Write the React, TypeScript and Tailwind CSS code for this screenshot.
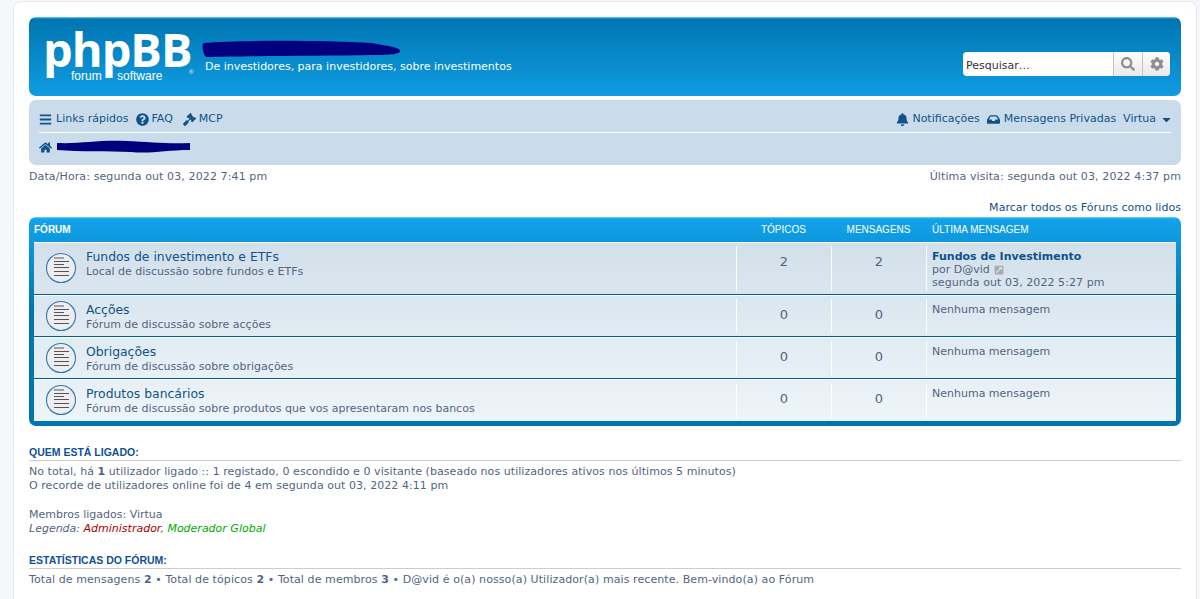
import { FaBars, FaBell, FaCaretDown, FaCog, FaExternalLinkSquareAlt, FaGavel, FaHome, FaInbox, FaQuestionCircle, FaSearch } from 'react-icons/fa';

const font = { fontFamily: '"DejaVu Sans", Verdana, sans-serif' };
const arial = { fontFamily: '"Liberation Sans", Arial, sans-serif' };

const forums = [
  { title: 'Fundos de investimento e ETFs', desc: 'Local de discussão sobre fundos e ETFs', topics: 2, posts: 2, h: 'h-[53px]', last: true },
  { title: 'Acções', desc: 'Fórum de discussão sobre acções', topics: 0, posts: 0, h: 'h-[42px]', last: false },
  { title: 'Obrigações', desc: 'Fórum de discussão sobre obrigações', topics: 0, posts: 0, h: 'h-[42px]', last: false },
  { title: 'Produtos bancários', desc: 'Fórum de discussão sobre produtos que vos apresentaram nos bancos', topics: 0, posts: 0, h: 'h-[42px]', last: false },
];

function ForumIcon() {
  return (
    <svg width="32" height="32" viewBox="0 0 32 32" className="shrink-0">
      <circle cx="16" cy="16" r="14.5" fill="#eeeef1" stroke="#2f77b3" strokeWidth="1.1" />
      <path d="M9 6h10M9 9.500h15M9 12.500h10M9 15.500h15M9 19.500h15M9 23.500h15" stroke="#555" strokeWidth="1" fill="none" />
    </svg>
  );
}

function Scribble({ width, height, d }: { width: number; height: number; d: string }) {
  return (
    <svg width={width} height={height} viewBox={`0 0 ${width} ${height}`} className="shrink-0">
      <path d={d} fill="#00007f" />
    </svg>
  );
}

function Stat({ value }: { value: number }) {
  return (
    <div className="w-[95px] shrink-0 my-[3px] border-l border-white flex justify-center pt-[6px] text-[13px] text-[#536482]">
      {value}
    </div>
  );
}

function ForumRow({ forum }: { forum: (typeof forums)[number] }) {
  return (
    <li className={`flex ${forum.h} border-t border-white border-b border-b-[#00608f] last:border-b-0`}>
      <div className="flex-1 flex pl-[11px] gap-[9px]">
        <div className="flex items-center -mt-[1px]">
          <ForumIcon />
        </div>
        <div className="pt-[6px]">
          <div className="text-[12.4px] leading-[15px] text-[#105289]">{forum.title}</div>
          <div className="text-[11px] leading-[15px] text-[#536482]">{forum.desc}</div>
        </div>
      </div>
      <Stat value={forum.topics} />
      <Stat value={forum.posts} />
      <div className="w-[250px] shrink-0 my-[3px] border-l border-white pl-[5px] pt-[4px] text-[11px] leading-[13px] text-[#536482]">
        {forum.last ? (
          <>
            <div className="font-bold text-[#105289]">Fundos de Investimento</div>
            <div className="flex items-center gap-[4px]">
              por D@vid
              <FaExternalLinkSquareAlt className="text-[10px] text-[#a9a9a9]" />
            </div>
            <div className="tracking-[0.07px]">segunda out 03, 2022 5:27 pm</div>
          </>
        ) : (
          'Nenhuma mensagem'
        )}
      </div>
    </li>
  );
}

export default function App() {
  return (
    <div className="h-[599px] overflow-hidden bg-[#f5f7fa] pl-[13px] pr-[3px] pt-[1px]" style={font}>
      <div className="h-[640px] bg-white border border-[#e6e9ed] rounded-lg px-[15px] pt-[15px] text-[11px] text-[#536482]">
        {/* header */}
        <div className="h-[79px] rounded-[7px] bg-[linear-gradient(to_bottom,#6aceff_0,#0076b1_2px,#12a3eb_92px)] flex items-start justify-between pl-[15px] pr-[10px]">
          <div className="flex">
            <div className="relative w-[158px] h-[79px] text-white">
              <span className="absolute -left-[1px] top-[7px] text-[47px] leading-[50px] font-bold tracking-[-1px]" style={{ fontFamily: '"Open Sans", sans-serif' }}>
                phpBB
              </span>
              <span className="absolute left-[27px] top-[53px] text-[12px] leading-[13px]" style={arial}>forum</span>
              <span className="absolute left-[73px] top-[53px] text-[12px] leading-[13px]" style={arial}>software</span>
              <span className="absolute left-[145px] top-[51px] text-[6px] leading-[8px]" style={arial}>®</span>
            </div>
            <div className="pt-[23px]">
              <Scribble width={199} height={18} d="M1 3 C40 0 120 0 170 3 C185 6 198 7 198 11 C198 14 190 15 170 15 C120 16 40 16 4 17 C1 14 0 8 1 3Z" />
              <div className="text-white text-[11px] leading-[14px] pl-[3px] mt-[2px]">De investidores, para investidores, sobre investimentos</div>
            </div>
          </div>
          <div className="mt-[35px] mr-[1px] flex h-[24px] rounded-[4px] bg-white overflow-hidden">
            <div className="w-[150px] pl-[3px] text-[11px] leading-[28px] text-[#333]">Pesquisar…</div>
            <div className="w-[29px] border-l border-[#c7c3bf] bg-[linear-gradient(to_bottom,#ffffff,#e9e9e9)] flex items-center justify-center">
              <FaSearch className="text-[14px] text-[#8f8f8f]" />
            </div>
            <div className="w-[28px] border-l border-[#c7c3bf] bg-[linear-gradient(to_bottom,#ffffff,#e9e9e9)] flex items-center justify-center">
              <FaCog className="text-[14px] text-[#8f8f8f]" />
            </div>
          </div>
        </div>

        {/* navbar */}
        <div className="mt-[4px] h-[65px] rounded-[7px] bg-[#cadceb] px-[10px] text-[#105289]">
          <div className="h-[33px] border-b border-white flex items-center justify-between pt-[6px]">
            <div className="flex items-center gap-[7px]">
              <span className="flex items-center gap-[4px]">
                <FaBars className="text-[13px]" />
                Links rápidos
              </span>
              <span className="flex items-center gap-[3px]">
                <FaQuestionCircle className="text-[13px]" />
                FAQ
              </span>
              <span className="flex items-center gap-[3px] ml-[3px]">
                <FaGavel className="text-[13px]" />
                MCP
              </span>
            </div>
            <div className="flex items-center gap-[7px]">
              <span className="flex items-center gap-[3px]">
                <FaBell className="text-[13px]" />
                Notificações
              </span>
              <span className="flex items-center gap-[4px]">
                <FaInbox className="text-[13px]" />
                Mensagens Privadas
              </span>
              <span className="flex items-center gap-[6px]">
                Virtua
                <FaCaretDown className="text-[13px] w-[9px]" />
              </span>
            </div>
          </div>
          <div className="flex items-center gap-[4px] h-[28px]">
            <FaHome className="text-[13px]" />
            <Scribble width={135} height={15} d="M1 3 C25 4 40 0 70 1 C95 2 110 4 134 3 L134 10 C110 10 95 14 75 12 C50 11 25 12 1 10Z" />
          </div>
        </div>

        {/* date row */}
        <div className="mt-[5px] h-[14px] leading-[14px] flex justify-between text-[#536482] tracking-[0.11px]">
          <span>Data/Hora: segunda out 03, 2022 7:41 pm</span>
          <span>Última visita: segunda out 03, 2022 4:37 pm</span>
        </div>
        <div className="mt-[17px] h-[14px] leading-[14px] text-right text-[#105289] tracking-[0.03px]">Marcar todos os Fóruns como lidos</div>

        {/* forum list */}
        <div className="mt-[2px] h-[209px] rounded-[7px] bg-[#0076b1] bg-[linear-gradient(to_bottom,#6aceff_0,#12a3eb_2px,#0076b1_92px)] px-[5px]">
          <div className="h-[25px] flex items-center text-[10px] font-bold text-white" style={arial}>
            <div className="flex-1">FÓRUM</div>
            <div className="w-[95px] shrink-0 text-center font-normal">TÓPICOS</div>
            <div className="w-[95px] shrink-0 text-center font-normal">MENSAGENS</div>
            <div className="w-[250px] shrink-0 pl-[6px] font-normal">ÚLTIMA MENSAGEM</div>
          </div>
          <ul className="bg-[linear-gradient(to_bottom,#d2e0eb,#eef5f9)]">
            {forums.map((forum) => (
              <ForumRow key={forum.title} forum={forum} />
            ))}
          </ul>
        </div>

        {/* who is online */}
        <div className="mt-[20px] text-[11px] leading-[14px]">
          <h3 className="h-[15px] border-b border-[#cccccc] text-[10.5px] leading-[13px] font-bold text-[#115098]" style={arial}>QUEM ESTÁ LIGADO:</h3>
          <p className="mt-[4px] tracking-[0.056px]">No total, há <b>1</b> utilizador ligado :: 1 registado, 0 escondido e 0 visitante (baseado nos utilizadores ativos nos últimos 5 minutos)</p>
          <p className="tracking-[0.055px]">O recorde de utilizadores online foi de 4 em segunda out 03, 2022 4:11 pm</p>
          <p className="mt-[15px]">Membros ligados: Virtua</p>
          <p className="italic">Legenda: <span className="text-[#aa0000]">Administrador</span>, <span className="text-[#00aa00]">Moderador Global</span></p>
          <h3 className="mt-[18px] h-[15px] border-b border-[#cccccc] text-[10.5px] leading-[13px] font-bold text-[#115098]" style={arial}>ESTATÍSTICAS DO FÓRUM:</h3>
          <p className="mt-[4px] tracking-[0.085px]">Total de mensagens <b>2</b> • Total de tópicos <b>2</b> • Total de membros <b>3</b> • D@vid é o(a) nosso(a) Utilizador(a) mais recente. Bem-vindo(a) ao Fórum</p>
        </div>
      </div>
    </div>
  );
}
